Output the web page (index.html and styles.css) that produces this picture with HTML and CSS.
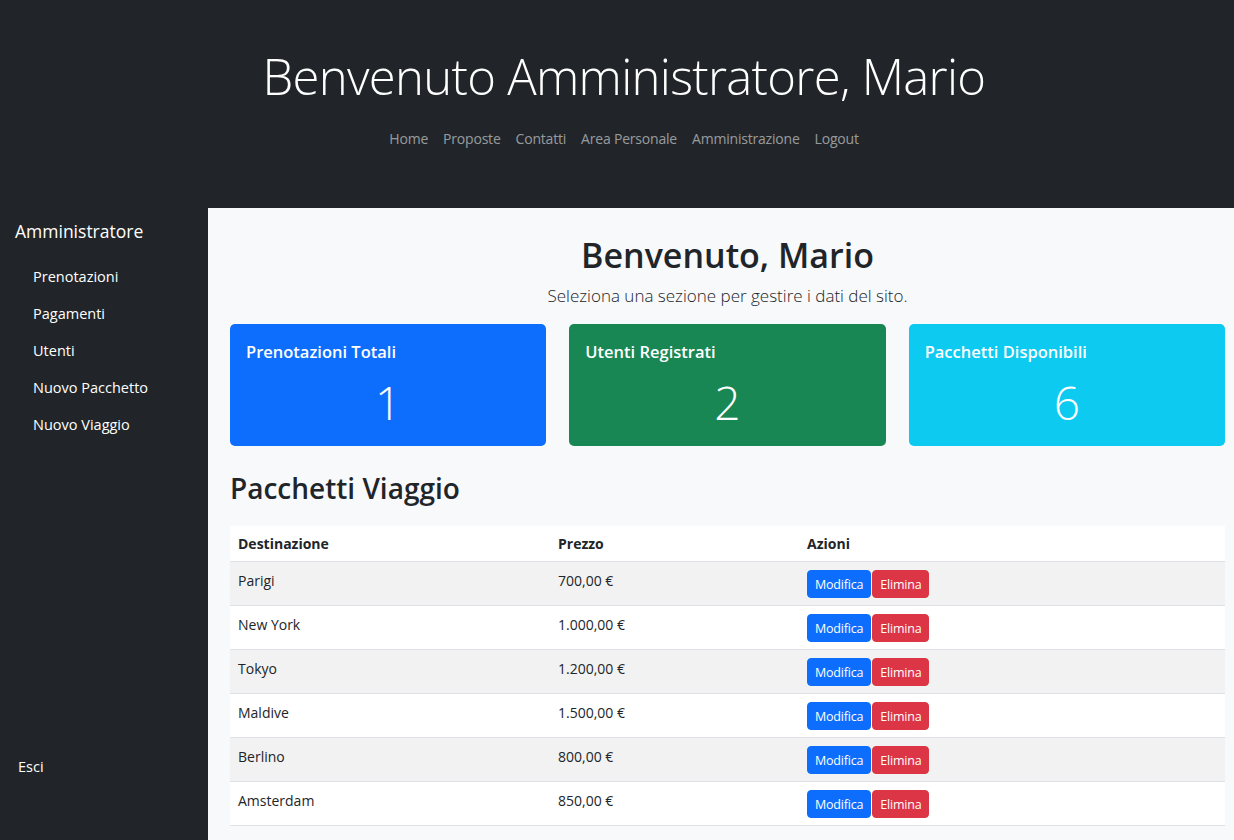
FILE: index.html
```html
<!DOCTYPE html>
<html lang="it">
<head>
<meta charset="utf-8">
<title>Amministrazione</title>
<link rel="stylesheet" href="styles.css">
</head>
<body>
<header class="site-header">
  <h1 class="site-title">Benvenuto Amministratore, Mario</h1>
  <nav class="top-nav">
    <a href="#">Home</a>
    <a href="#">Proposte</a>
    <a href="#">Contatti</a>
    <a href="#">Area Personale</a>
    <a href="#">Amministrazione</a>
    <a href="#">Logout</a>
  </nav>
</header>
<div class="layout">
  <aside class="sidebar">
    <h5 class="side-title">Amministratore</h5>
    <ul class="side-menu">
      <li><a href="#">Prenotazioni</a></li>
      <li><a href="#">Pagamenti</a></li>
      <li><a href="#">Utenti</a></li>
      <li><a href="#">Nuovo Pacchetto</a></li>
      <li><a href="#">Nuovo Viaggio</a></li>
    </ul>
    <a class="side-exit" href="#">Esci</a>
  </aside>
  <main class="main">
    <h2 class="welcome">Benvenuto, Mario</h2>
    <p class="lead">Seleziona una sezione per gestire i dati del sito.</p>
    <div class="cards">
      <div class="card card-primary">
        <div class="card-title">Prenotazioni Totali</div>
        <div class="card-value">1</div>
      </div>
      <div class="card card-success">
        <div class="card-title">Utenti Registrati</div>
        <div class="card-value">2</div>
      </div>
      <div class="card card-info">
        <div class="card-title">Pacchetti Disponibili</div>
        <div class="card-value">6</div>
      </div>
    </div>
    <h3 class="section-title">Pacchetti Viaggio</h3>
    <table class="table">
      <thead>
        <tr><th class="c1">Destinazione</th><th class="c2">Prezzo</th><th>Azioni</th></tr>
      </thead>
      <tbody>
        <tr><td>Parigi</td><td>700,00 €</td><td><span class="btn btn-primary">Modifica</span><span class="btn btn-danger">Elimina</span></td></tr>
        <tr><td>New York</td><td>1.000,00 €</td><td><span class="btn btn-primary">Modifica</span><span class="btn btn-danger">Elimina</span></td></tr>
        <tr><td>Tokyo</td><td>1.200,00 €</td><td><span class="btn btn-primary">Modifica</span><span class="btn btn-danger">Elimina</span></td></tr>
        <tr><td>Maldive</td><td>1.500,00 €</td><td><span class="btn btn-primary">Modifica</span><span class="btn btn-danger">Elimina</span></td></tr>
        <tr><td>Berlino</td><td>800,00 €</td><td><span class="btn btn-primary">Modifica</span><span class="btn btn-danger">Elimina</span></td></tr>
        <tr><td>Amsterdam</td><td>850,00 €</td><td><span class="btn btn-primary">Modifica</span><span class="btn btn-danger">Elimina</span></td></tr>
      </tbody>
    </table>
  </main>
</div>
</body>
</html>
```
FILE: styles.css
```css
* { box-sizing: border-box; }
html, body { margin: 0; padding: 0; }
body {
  font-family: "Open Sans", "Noto Sans", sans-serif;
  color: #212529;
  background: #f8f9fa;
  height: 840px;
  overflow: hidden;
}
a { text-decoration: none; }

.site-header {
  background: #212529;
  height: 208px;
  padding: 42px 0 0 14px;
  text-align: center;
}
.site-title {
  margin: 0;
  font-size: 49px;
  font-weight: 300;
  line-height: 68px;
  color: #fff;
  letter-spacing: -0.7px;
}
.top-nav {
  margin-top: 18px;
  display: flex;
  justify-content: center;
  gap: 15px;
  font-size: 14px;
  line-height: 22px;
  letter-spacing: -0.2px;
}
.top-nav a { color: rgba(255,255,255,0.55); }

.layout {
  display: flex;
  height: 632px;
}
.sidebar {
  width: 208px;
  flex: none;
  background: #212529;
  color: #fff;
  display: flex;
  flex-direction: column;
  padding: 11px 0 63px 15px;
}
.side-title {
  margin: 0;
  font-size: 17.5px;
  font-weight: 400;
  line-height: 24px;
}
.side-menu {
  list-style: none;
  margin: 23px 0 0;
  padding: 0 0 0 18px;
}
.side-menu li { height: 37px; line-height: 20px; }
.side-menu a, .side-exit {
  color: #fff;
  font-size: 14.5px;
}
.side-exit {
  margin-top: auto;
  margin-left: 3px;
  line-height: 20px;
}

.main {
  flex: 1;
  padding: 24px 9px 0 22px;
  background: #f8f9fa;
}
.welcome {
  margin: 0;
  text-align: center;
  font-size: 34px;
  font-weight: 600;
  line-height: 46px;
}
.lead {
  margin: 6px 0 0;
  text-align: center;
  font-size: 17px;
  font-weight: 300;
  line-height: 24px;
}
.cards {
  margin-top: 16px;
  display: grid;
  grid-template-columns: repeat(3, 1fr);
  gap: 23px;
}
.card {
  height: 122px;
  border-radius: 5px;
  color: #fff;
  padding: 16px 16px 0;
}
.card-primary { background: #0d6efd; }
.card-success { background: #198754; }
.card-info { background: #0dcaf0; }
.card-title {
  font-size: 16.5px;
  font-weight: 600;
  line-height: 24px;
}
.card-value {
  text-align: center;
  font-size: 46px;
  font-weight: 300;
  line-height: 58px;
  margin-top: 9px;
}
.section-title {
  margin: 23px 0 0;
  font-size: 28px;
  font-weight: 600;
  line-height: 38px;
}
.table {
  margin-top: 19px;
  width: 100%;
  border-collapse: collapse;
  background: #fff;
  font-size: 14px;
}
.table th, .table td {
  text-align: left;
  padding: 0 8px;
  border-bottom: 1px solid #dee2e6;
  vertical-align: top;
}
.table th {
  height: 35px;
  font-weight: 700;
  padding-top: 8px;
  line-height: 20px;
}
.table td {
  height: 44px;
  padding-top: 9px;
  line-height: 20px;
  color: #212529;
}
.table td:last-child { padding-top: 8px; }
.table .c1 { width: 320px; }
.table .c2 { width: 249px; }
.table tbody tr:nth-child(odd) td { background: #f2f2f2; }
.btn {
  display: inline-block;
  height: 28px;
  line-height: 27px;
  padding: 0 7px;
  font-size: 12.5px;
  color: #fff;
  border-radius: 4px;
  border: 1px solid transparent;
  vertical-align: top;
  letter-spacing: -0.2px;
}
.btn-primary { background: #0d6efd; border-color: #0d6efd; }
.btn-danger { background: #dc3545; border-color: #dc3545; margin-left: 1px; }
```
